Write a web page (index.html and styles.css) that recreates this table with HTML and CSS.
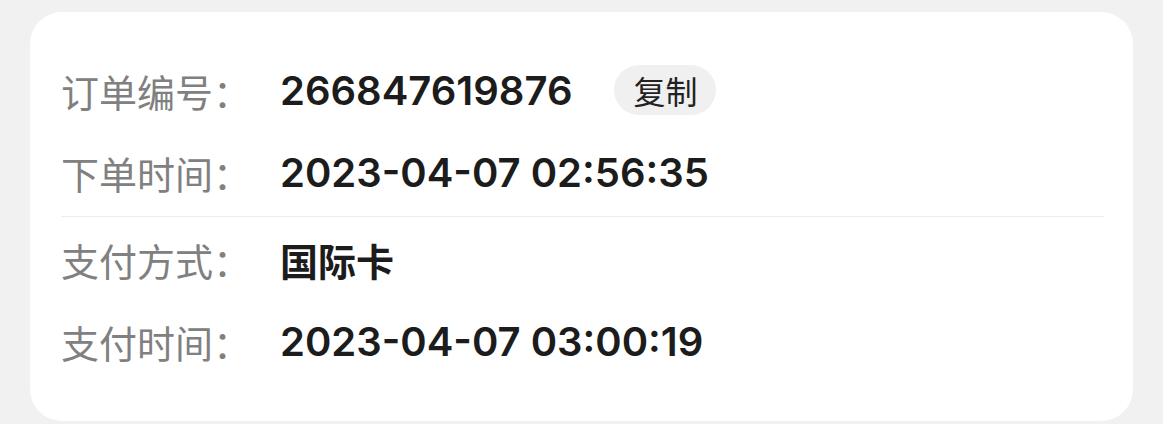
FILE: index.html
```html
<!DOCTYPE html>
<html lang="zh-CN">

<head>
    <meta charset="UTF-8">
    <meta name="viewport" content="width=device-width, initial-scale=1.0">
    <title>订单信息</title>
    <link rel="stylesheet" href="styles.css">
</head>

<body>
    <div class="card">
        <div class="row">
            <span class="label">订单编号：</span>
            <span class="value">266847619876</span>
            <button class="copy-btn">复制</button>
        </div>
        <div class="row">
            <span class="label">下单时间：</span>
            <span class="value">2023-04-07 02:56:35</span>
        </div>
        <div class="divider"></div>
        <div class="row">
            <span class="label">支付方式：</span>
            <span class="value cn">国际卡</span>
        </div>
        <div class="row">
            <span class="label">支付时间：</span>
            <span class="value">2023-04-07 03:00:19</span>
        </div>
    </div>
</body>

</html>
```

FILE: styles.css
```css
body {
    font-family: Inter, "Noto Sans CJK SC", sans-serif;
    background-color: #f1f1f1;
    margin: 0;
    padding: 12px 30px 0 30px;
}

.card {
    background-color: #fff;
    border-radius: 32px;
    height: 409px;
    box-sizing: border-box;
    padding: 37px 29px 0 31px;
}

.row {
    display: flex;
    align-items: center;
    height: 82px;
}

.label {
    width: 219px;
    font-size: 38px;
    color: #808080;
    font-family: "Noto Sans CJK SC", sans-serif;
}

.value {
    font-size: 40px;
    font-weight: 600;
    color: #1c1c1c;
}

.value.cn {
    font-size: 38px;
    font-weight: 700;
}

.copy-btn {
    margin-left: 42px;
    height: 50px;
    padding: 0 19px;
    border: none;
    border-radius: 25px;
    background-color: #f0f0f0;
    color: #222;
    font-family: "Noto Sans CJK SC", sans-serif;
    font-size: 32px;
}

.divider {
    height: 1px;
    background-color: #ececec;
    margin: 3px 0 1px 0;
}
```
